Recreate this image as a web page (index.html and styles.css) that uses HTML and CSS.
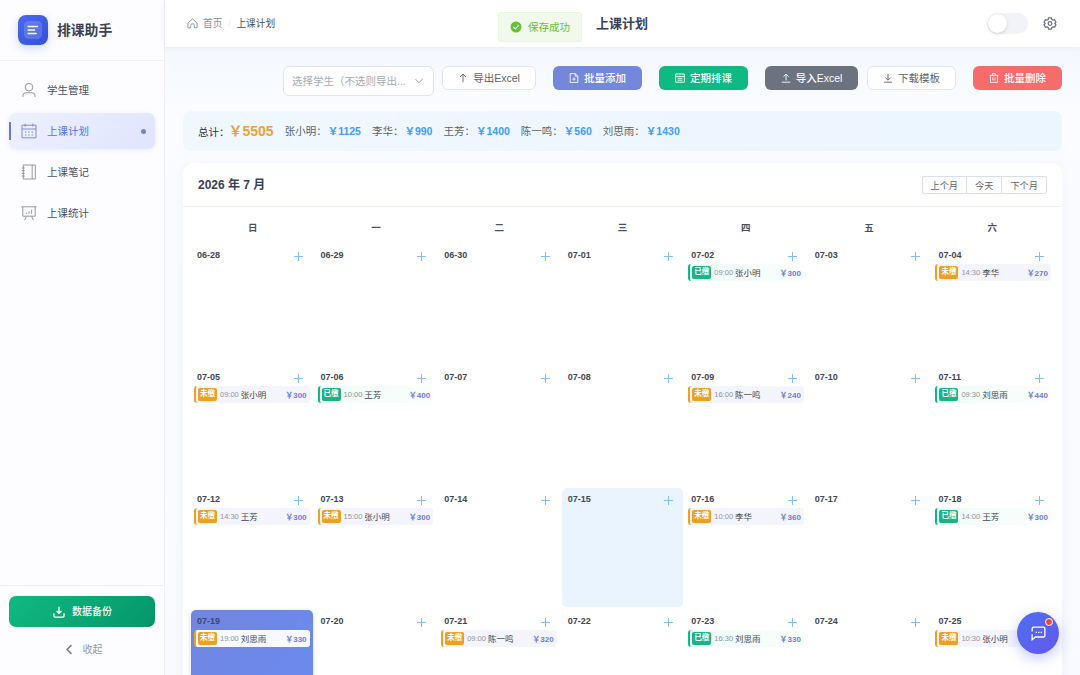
FILE: index.html
```
<!DOCTYPE html>
<html lang="zh-CN">
<head>
  <meta charset="UTF-8" />
  <meta name="viewport" content="width=device-width, initial-scale=1.0"/>
  <title>排课助手 - 上课计划</title>
  <link rel="stylesheet" href="styles.css">
</head>
<body>
  <div class="layout">
    <aside class="sidebar">
      <div class="brand">
        <div class="logo">
          <svg viewBox="0 0 30 30"><rect x="6" y="6" width="18" height="18" rx="4.5" fill="#fff" fill-opacity=".16"/><path d="M10.2 11.5h9M10.2 15h6.2M10.2 18.5h8" stroke="#fff" stroke-width="1.6" stroke-linecap="round"/></svg>
        </div>
        <span>排课助手</span>
      </div>

      <nav class="menu">
        <a href="#">
          <svg viewBox="0 0 16 16"><circle cx="8" cy="5.2" r="3.8"/><path d="M1.9 15v-1.2a3 3 0 0 1 3-3h6.2a3 3 0 0 1 3 3V15"/></svg>
          <span>学生管理</span>
        </a>
        <a href="#" class="active">
          <svg viewBox="0 0 16 16"><path d="M1 2.2h14v12.6H1zM1 6h14M4.2.6v3M11.8.6v3"/><path d="M4 9h1.4M7.3 9h1.4M10.6 9H12M4 12h1.4M7.3 12h1.4M10.6 12H12"/></svg>
          <span>上课计划</span>
          <i class="dot"></i>
        </a>
        <a href="#">
          <svg viewBox="0 0 16 16"><path d="M2.3 1h12v14h-12zM11.2 1v14M.8 4h3M.8 6.7h3M.8 9.4h3M.8 12.1h3"/></svg>
          <span>上课笔记</span>
        </a>
        <a href="#">
          <svg viewBox="0 0 16 16"><path d="M.4 1.8h15.2M1.8 1.8v9.4h12.4V1.8M5.4 11.4l-1.8 3.8M10.6 11.4l1.8 3.8M5.4 8.8V7.4M8 8.8V6.2M10.6 8.8V4.8"/></svg>
          <span>上课统计</span>
        </a>
      </nav>

      <div class="sidebar-foot">
        <button class="backup">
          <svg viewBox="0 0 12 12"><path d="M6 .8v6.4M3.6 5L6 7.4 8.4 5M.9 7.2v2.6q0 1.3 1.3 1.3h7.6q1.3 0 1.3-1.3V7.2"/></svg>
          <span>数据备份</span>
        </button>
        <div class="collapse">
          <svg viewBox="0 0 10 10"><path d="M6.8 1L2.8 5l4 4"/></svg>
          <span>收起</span>
        </div>
      </div>
    </aside>

    <div class="main">
      <header class="topbar">
        <div class="crumb">
          <svg viewBox="0 0 12 12"><path d="M1 5.4L6 1l5 4.4v5.3H8V8.2a2 2 0 0 0-4 0v2.5H1z"/></svg>
          <span>首页</span>
          <em>/</em>
          <b>上课计划</b>
        </div>
        <h1>上课计划</h1>
        <div class="top-right">
          <div class="switch"></div>
          <svg class="gear" viewBox="0 0 14 14"><path d="M5.5 1h3l.5 1.7 1.2.7 1.7-.4 1.5 2.6L12.2 7l1.2 1.4-1.5 2.6-1.7-.4-1.2.7-.5 1.7h-3L5 11.3l-1.2-.7-1.7.4L.6 8.4 1.8 7 .6 5.6 2.1 3l1.7.4L5 2.7z"/><circle cx="7" cy="7" r="2"/></svg>
        </div>
      </header>

      <div class="content">
        <div class="toolbar">
          <div class="select">
            <span>选择学生（不选则导出...</span>
            <svg viewBox="0 0 10 10"><path d="M1.4 3L5 6.8 8.6 3"/></svg>
          </div>
          <button class="btn export">
            <svg viewBox="0 0 10 10"><path d="M5 9.2V1M2 4l3-3 3 3"/></svg>
            <span>导出Excel</span>
          </button>
          <button class="btn primary">
            <svg viewBox="0 0 10 10"><path d="M1.2.6h5l2.6 2.6v6.2H1.2zM6.2.6v2.6h2.6M5 4.6v3M3.5 6.1h3"/></svg>
            <span>批量添加</span>
          </button>
          <button class="btn success">
            <svg viewBox="0 0 10 10"><path d="M.6 1h8.8v8.2H.6zM.6 3.4h8.8M2.6 5.3h4.8M2.6 7.2h4.8"/></svg>
            <span>定期排课</span>
          </button>
          <button class="btn info">
            <svg viewBox="0 0 10 10"><path d="M5 7.4V1.2M2.4 3.6L5 1l2.6 2.6M.8 9.2h8.4"/></svg>
            <span>导入Excel</span>
          </button>
          <button class="btn tpl">
            <svg viewBox="0 0 10 10"><path d="M5 1v6M2.4 4.6L5 7.2l2.6-2.6M1 9.2h8"/></svg>
            <span>下载模板</span>
          </button>
          <button class="btn danger">
            <svg viewBox="0 0 10 10"><path d="M.6 2.4h8.8M3.4 2.4V.7h3.2v1.7M1.5 2.4v7h7v-7M3.9 4.4v3M6.1 4.4v3"/></svg>
            <span>批量删除</span>
          </button>
        </div>

        <div class="summary">
          <span class="total">总计：<b>￥5505</b></span>
          <span>张小明：<b>￥1125</b></span>
          <span>李华：<b>￥990</b></span>
          <span>王芳：<b>￥1400</b></span>
          <span>陈一鸣：<b>￥560</b></span>
          <span>刘思雨：<b>￥1430</b></span>
        </div>

        <section class="calendar">
          <div class="cal-head">
            <h2>2026 年 7 月</h2>
            <div class="btn-group">
              <button>上个月</button><button>今天</button><button>下个月</button>
            </div>
          </div>
          <div class="cal-body">
            <div class="week">
              <span>日</span><span>一</span><span>二</span><span>三</span><span>四</span><span>五</span><span>六</span>
            </div>
            <div class="days" id="days"></div>
          </div>
        </section>
      </div>
    </div>
  </div>

  <div class="message">
    <svg viewBox="0 0 12 12"><circle cx="6" cy="6" r="5.5" fill="#67c23a"/><path d="M3.5 6.1l1.8 1.8 3.3-3.5" fill="none" stroke="#fff" stroke-width="1.1"/></svg>
    <span>保存成功</span>
  </div>

  <div class="chat">
    <svg viewBox="0 0 16 16"><path d="M3.5 2h9.3q1.2 0 1.2 1.2v6.9q0 1.2-1.2 1.2H5L2 14V8.6M2 6V3.4Q2 2 3.5 2"/><path d="M5.4 7h1.2M7.7 7h1.2M10 7h1.2"/></svg>
    <i></i>
  </div>

  <script>
    // date: [time, student, fee, paid]
    const lessons = {
      "07-02": ["09:00", "张小明", 300, true],
      "07-04": ["14:30", "李华", 270, false],
      "07-05": ["09:00", "张小明", 300, false],
      "07-06": ["10:00", "王芳", 400, true],
      "07-09": ["16:00", "陈一鸣", 240, false],
      "07-11": ["09:30", "刘思雨", 440, true],
      "07-12": ["14:30", "王芳", 300, false],
      "07-13": ["15:00", "张小明", 300, false],
      "07-16": ["10:00", "李华", 360, false],
      "07-18": ["14:00", "王芳", 300, true],
      "07-19": ["19:00", "刘思雨", 330, false],
      "07-21": ["09:00", "陈一鸣", 320, false],
      "07-23": ["16:30", "刘思雨", 330, true],
      "07-25": ["10:30", "张小明", 300, false]
    };
    const state = { "07-15": "selected", "07-19": "today" };

    const box = document.getElementById("days");
    for (let i = 0; i < 28; i++) {
      const d = new Date(2026, 5, 28 + i);
      const key = String(d.getMonth() + 1).padStart(2, "0") + "-" + String(d.getDate()).padStart(2, "0");
      let html = `<div class="day-top"><span>${key}</span><i class="add"></i></div>`;
      const l = lessons[key];
      if (l) {
        html += `<div class="lesson ${l[3] ? "paid" : "unpaid"}"><span class="tag">${l[3] ? "已缴" : "未缴"}</span><time>${l[0]}</time><span class="name">${l[1]}</span><b>￥${l[2]}</b></div>`;
      }
      const cell = document.createElement("div");
      cell.className = "day " + (state[key] || "");
      cell.innerHTML = html;
      box.appendChild(cell);
    }
  </script>
</body>
</html>
```
FILE: styles.css
```
* { box-sizing: border-box; }
body {
  margin: 0;
  height: 675px;
  overflow: hidden;
  font-family: "Liberation Sans", "Noto Sans CJK SC", sans-serif;
  font-size: 10.5px;
  color: #606266;
  background: #f7f9fd;
}
svg {
  fill: none;
  stroke: currentColor;
  flex-shrink: 0;
}
button { font-family: inherit; }
i, em { font-style: normal; }
.layout {
  display: flex;
  height: 675px;
}

/* sidebar */
.sidebar {
  width: 165px;
  display: flex;
  flex-direction: column;
  background: #fdfdff;
  border-right: 1px solid #eef0f6;
  flex-shrink: 0;
}
.brand {
  height: 61px;
  padding-left: 18px;
  display: flex;
  align-items: center;
  gap: 9px;
  border-bottom: 1px solid #eff1f5;
  font-size: 13.8px;
  font-weight: bold;
  color: #3a4256;
}
.brand span { padding-bottom: 2px; }
.logo {
  width: 30px;
  height: 30px;
  border-radius: 8px;
  background: linear-gradient(135deg, #4a68f0, #3450d8);
  box-shadow: 0 3px 8px rgba(67,97,238,0.25);
}
.logo svg { display: block; stroke: none; }
.menu {
  flex: 1;
  padding: 11px 9px;
  display: flex;
  flex-direction: column;
  gap: 5px;
}
.menu a {
  height: 36px;
  padding: 0 9px 0 12px;
  display: flex;
  align-items: center;
  gap: 10px;
  border-radius: 7px;
  color: #4b5263;
  text-decoration: none;
  font-size: 10.5px;
}
.menu span, .btn span, .message span, .backup span, .collapse span { padding-bottom: 2px; }
.menu svg {
  width: 16px;
  height: 16px;
  color: #9297a3;
}
.menu .active {
  color: #5470ee;
  background: linear-gradient(135deg, #edf0fe, #e0e5fd);
  box-shadow: 0 1px 4px rgba(102,126,234,0.15);
  position: relative;
}
.menu .active svg { color: #7c8ccf; }
.menu .active::before {
  content: "";
  position: absolute;
  left: 0;
  top: 9px;
  width: 2px;
  height: 18px;
  background: #667bce;
}
.dot {
  width: 5px;
  height: 5px;
  margin-left: auto;
  border-radius: 50%;
  background: #7083d4;
}
.sidebar-foot {
  height: 90px;
  padding: 10px 9px;
  border-top: 1px solid #eff1f5;
}
.backup {
  width: 100%;
  height: 31px;
  padding: 0 0 0 1px;
  display: flex;
  align-items: center;
  justify-content: center;
  gap: 7px;
  border: none;
  border-radius: 7px;
  color: #fff;
  font-size: 10px;
  font-weight: 500;
  background: linear-gradient(135deg, #10b981, #059669);
}
.backup svg { width: 12px; height: 12px; margin-top: 1px; stroke-width: 1.4; }
.collapse {
  height: 44px;
  display: flex;
  align-items: center;
  justify-content: center;
  gap: 8px;
  padding-left: 2px;
  font-size: 10px;
  color: #9298a5;
}
.collapse svg { width: 11px; height: 11px; stroke-width: 1.5; color: #7c8290; }

/* top bar */
.main {
  flex: 1;
  min-width: 0;
  display: flex;
  flex-direction: column;
}
.topbar {
  height: 47px;
  padding: 0 23px 0 22px;
  display: grid;
  grid-template-columns: 1fr auto 1fr;
  align-items: center;
  background: #fff;
  box-shadow: 0 1px 6px rgba(60,70,110,0.08);
  flex-shrink: 0;
  z-index: 1;
}
.crumb {
  display: flex;
  align-items: center;
  font-size: 9.7px;
  color: #8d9199;
  padding-bottom: 2px;
}
.crumb svg { width: 11px; height: 11px; margin: 1px 5px 0 0; }
.crumb em { width: 14px; text-align: center; color: #e4e7ed; }
.crumb b { font-weight: 400; color: #4a4f5c; }
.topbar h1 {
  margin: 0;
  padding-bottom: 2px;
  font-size: 13px;
  color: #3a4256;
}
.top-right {
  display: flex;
  align-items: center;
  justify-content: flex-end;
  gap: 15px;
}
.switch {
  width: 41px;
  height: 21px;
  padding: 1px;
  border-radius: 11px;
  background: #f2f3f8;
}
.switch::before {
  content: "";
  display: block;
  width: 19px;
  height: 19px;
  border-radius: 50%;
  background: #fff;
  box-shadow: 0 1px 3px rgba(0,0,0,0.16);
}
.gear { width: 14px; height: 13px; color: #6d7079; stroke-width: 1.3; }

/* toolbar */
.content {
  flex: 1;
  min-height: 0;
  overflow: hidden;
  padding: 19px 18px 0;
  background: linear-gradient(180deg, #f4f7fd, #fafcff 60px, #f8faff);
}
.toolbar {
  display: flex;
  align-items: flex-start;
  justify-content: flex-end;
  height: 45px;
}
.select {
  width: 151px;
  height: 30px;
  padding: 0 9px 0 8px;
  display: flex;
  align-items: center;
  justify-content: space-between;
  border: 1px solid #e0e3ea;
  border-radius: 6px;
  background: #fff;
  color: #a8abb2;
  white-space: nowrap;
}
.select span { padding-bottom: 1px; }
.select svg { width: 10px; height: 10px; }
.btn {
  width: 89px;
  height: 24px;
  padding: 0;
  margin-left: 17px;
  display: flex;
  align-items: center;
  justify-content: center;
  gap: 5px;
  border: 1px solid #e1e4ec;
  border-radius: 6px;
  background: #fff;
  color: #606266;
  font-size: 10.5px;
  white-space: nowrap;
}
.btn svg { width: 10px; height: 10px; stroke-width: 0.9; }
.export { width: 94px; margin-left: 8px; }
.tpl { margin-left: 9px; }
.primary, .success, .info, .danger {
  border: none;
  color: #fff;
  font-weight: 500;
}
.primary { background: #7387db; }
.success { background: #10b981; }
.info { width: 93px; background: #6b7280; }
.danger { background: #f56c6c; }

/* fee summary */
.summary {
  height: 40px;
  padding: 0 15px 2px;
  display: flex;
  align-items: center;
  gap: 11px;
  border-radius: 8px;
  background: linear-gradient(90deg, #f0f7ff, #ecf6ff);
}
.summary b { color: #409eff; margin-left: 1px; }
.summary .total { color: #303133; }
.summary .total b { margin-left: -1px; font-size: 14px; color: #e6a23c; }

/* calendar */
.calendar {
  margin-top: 12px;
  height: 600px;
  border-radius: 11px;
  background: #fff;
  box-shadow: 0 2px 12px rgba(60,80,140,0.06);
}
.cal-head {
  height: 44px;
  padding: 0 15px;
  display: flex;
  align-items: center;
  justify-content: space-between;
  border-bottom: 1px solid #ebeef3;
}
.cal-head h2 {
  margin: 0;
  padding-bottom: 2px;
  font-size: 12px;
  color: #3c4150;
}
.btn-group { display: flex; }
.btn-group button {
  height: 18px;
  padding: 0 8px;
  border: 1px solid #dcdfe6;
  margin-left: -1px;
  background: #fff;
  color: #606266;
  font-size: 9.2px;
}
.btn-group button:first-child { border-radius: 2px 0 0 2px; }
.btn-group button:last-child { border-radius: 0 2px 2px 0; }
.cal-body { padding: 0 8px; }
.week {
  height: 37px;
  padding-top: 2px;
  display: grid;
  grid-template-columns: repeat(7, 1fr);
  align-items: center;
  text-align: center;
  font-size: 9.5px;
  font-weight: bold;
  color: #4a4f5c;
}
.days {
  display: grid;
  grid-template-columns: repeat(7, 1fr);
  grid-auto-rows: 119px;
  gap: 3px 2px;
}
.day {
  padding: 3px 3px;
  border-radius: 5px;
}
.day-top {
  height: 17px;
  padding: 0 7px 0 3px;
  display: flex;
  align-items: center;
  justify-content: space-between;
  font-size: 9px;
  font-weight: bold;
  color: #43474f;
}
.day-top span { padding-bottom: 2px; }
.add {
  width: 9px;
  height: 9px;
  margin-top: 1px;
  background:
    linear-gradient(#83bdff, #83bdff) center / 9px 1px no-repeat,
    linear-gradient(#83bdff, #83bdff) center / 1px 9px no-repeat;
}
.selected { background: #e9f4ff; }
.today {
  background: linear-gradient(135deg, #7186de, #6a8bf5);
  box-shadow: 0 1px 4px rgba(102,126,234,0.3);
}
.today .add { opacity: 0.12; }
.today .day-top { color: #3b4674; }
.lesson {
  height: 17px;
  padding: 0 3px 0 2px;
  display: flex;
  align-items: center;
  border-left: 2px solid #f0a020;
  border-radius: 3px;
  background: #f4f5fc;
  font-size: 8.5px;
  white-space: nowrap;
}
.paid { border-color: #10b981; background: linear-gradient(90deg, #effbf7, #fafefd); }
.today .lesson { background: #f7f9ff; }
.tag {
  width: 19px;
  height: 13px;
  line-height: 12px;
  margin-right: 3px;
  text-align: center;
  border-radius: 2px;
  background: #f0a020;
  color: #fff;
  font-size: 7.5px;
  font-weight: bold;
}
.paid .tag { background: #18b586; }
.lesson time { color: #8f939b; font-size: 7.5px; margin-right: 2px; }
.lesson .name { color: #43474f; padding-bottom: 1px; }
.lesson b { margin-left: auto; color: #6b7fdc; font-size: 8px; }

/* toast */
.message {
  position: absolute;
  top: 12px;
  left: 498px;
  width: 84px;
  height: 30px;
  display: flex;
  align-items: center;
  justify-content: center;
  gap: 6px;
  border: 1px solid #e8f6e0;
  border-radius: 3px;
  background: #f0f9eb;
  color: #67c23a;
  z-index: 5;
}
.message svg { width: 12px; height: 12px; stroke: none; }

/* chat bubble */
.chat {
  position: absolute;
  left: 1017px;
  top: 612px;
  width: 42px;
  height: 42px;
  display: flex;
  align-items: center;
  justify-content: center;
  border-radius: 50%;
  background: linear-gradient(135deg, #4f6df2, #6358ee);
  box-shadow: 0 4px 14px rgba(90,95,240,0.35);
  color: #fff;
  z-index: 5;
}
.chat svg { width: 17px; height: 17px; stroke-width: 1.2; }
.chat i {
  position: absolute;
  top: 6px;
  right: 6px;
  width: 8px;
  height: 8px;
  border: 1.5px solid #fff;
  border-radius: 50%;
  background: #ef4444;
}
```
